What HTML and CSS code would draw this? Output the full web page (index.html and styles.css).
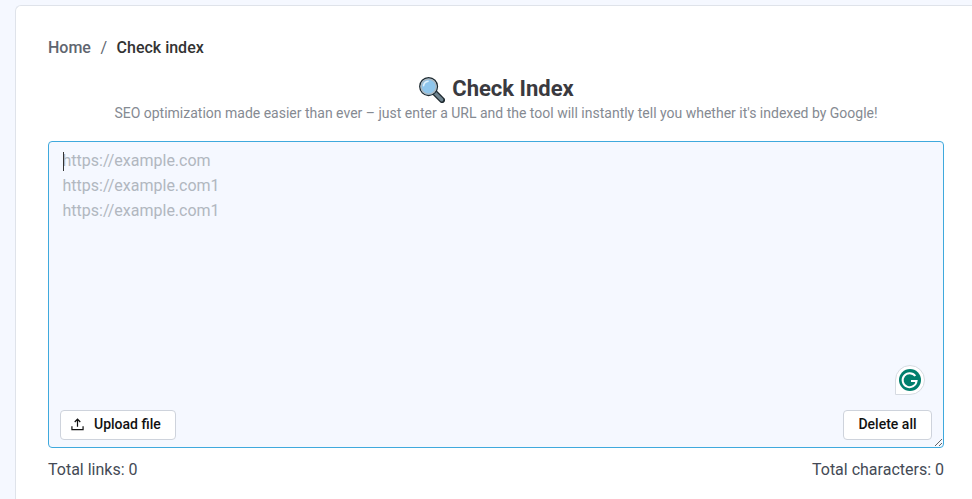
FILE: index.html
```html
<!DOCTYPE html>
<html lang="en">
<head>
<meta charset="utf-8">
<title>Check Index</title>
<link rel="stylesheet" href="styles.css">
</head>
<body>
<main class="card">
  <nav class="crumbs"><a class="crumb-link">Home</a><span class="crumb-sep">/</span><span class="crumb-current">Check index</span></nav>
  <h1 class="title">
    <svg class="title-icon" viewBox="0 0 28 28" aria-hidden="true">
      <path d="M17 17 L25 25" stroke="#1f2a30" stroke-width="6" stroke-linecap="round"/>
      <path d="M17.5 17.5 L24.6 24.6" stroke="#6f8490" stroke-width="3.4" stroke-linecap="round"/>
      <circle cx="11" cy="11" r="9.2" fill="#8fc6ec" stroke="#1f2a30" stroke-width="1.4"/>
      <circle cx="11" cy="11" r="7.8" fill="none" stroke="#aeb9c0" stroke-width="1.4"/>
      <path d="M5.8 10 A5.5 5.5 0 0 1 10.5 5.4" stroke="#dff1fc" stroke-width="1.6" fill="none" stroke-linecap="round"/>
    </svg>
    <span>Check Index</span>
  </h1>
  <p class="subtitle">SEO optimization made easier than ever – just enter a URL and the tool will instantly tell you whether it's indexed by Google!</p>
  <div class="field">
    <textarea class="urls" placeholder="https://example.com&#10;https://example.com1&#10;https://example.com1"></textarea>
    <span class="caret"></span>
    <span class="grammarly">
      <svg viewBox="0 0 22 22" class="grammarly-g" aria-hidden="true">
        <circle cx="11" cy="11" r="11" fill="#007f6d"/>
        <path d="M16.3 7 A7 7 0 1 0 17.6 12 L12 12" fill="none" stroke="#fff" stroke-width="2"/>
      </svg>
    </span>
    <button class="btn btn-upload" type="button">
      <svg class="btn-icon" viewBox="0 0 14 14" aria-hidden="true">
        <path d="M7 9.5 V1.5 M4 4.3 L7 1.3 L10 4.3 M1 9 V12.5 H13 V9" fill="none" stroke="#111" stroke-width="1.3"/>
      </svg>
      Upload file
    </button>
    <button class="btn btn-delete" type="button">Delete all</button>
  </div>
  <div class="totals"><span>Total links: 0</span><span>Total characters: 0</span></div>
</main>
</body>
</html>
```
FILE: styles.css
```css
* { box-sizing: border-box; }
html, body { height: 100%; margin: 0; overflow: hidden; }
body {
  background: #f5f8ff;
  padding: 5px 0 0 15px;
  font-family: Roboto, "Liberation Sans", sans-serif;
  color: #333;
}
.card {
  height: 100%;
  background: #fff;
  border: 1px solid #dfe3ea;
  border-width: 1px 0 0 1px;
  border-radius: 6px 0 0 0;
  padding: 32px 28px 0 32px;
}
.crumbs {
  display: flex;
  align-items: center;
  height: 20px;
  font-size: 16px;
  font-weight: 500;
  line-height: 20px;
}
.crumb-link { color: #5f6670; }
.crumb-sep { margin: 0 9.5px; color: #5f6670; font-weight: 400; }
.crumb-current { color: #333; }
.title {
  display: flex;
  justify-content: center;
  align-items: center;
  gap: 7px;
  margin: 16px 0 0;
  height: 30px;
  font-size: 22px;
  font-weight: 700;
  line-height: 30px;
  color: #3a3a3f;
}
.title-icon { width: 27px; height: 27px; }
.subtitle {
  margin: 0;
  text-align: center;
  font-size: 14px;
  line-height: 18px;
  color: #858a92;
}
.field { position: relative; margin-top: 19px; height: 307px; }
.urls {
  display: block;
  width: 100%;
  height: 100%;
  margin: 0;
  padding: 6px 13.5px;
  background: #f5f8ff;
  border: 1px solid #3fa9dd;
  border-radius: 4px;
  outline: none;
  font: 400 16px/25px Roboto, "Liberation Sans", sans-serif;
  color: #333;
}
.urls::placeholder { color: #b1b7c0; opacity: 1; }
.caret {
  position: absolute;
  left: 15px;
  top: 11px;
  width: 1px;
  height: 19px;
  background: #333;
}
.grammarly {
  position: absolute;
  left: 847px;
  top: 224px;
  width: 30px;
  height: 30px;
  display: flex;
  align-items: center;
  justify-content: center;
  background: #fff;
  border: 1px solid #d6dbe2;
  border-radius: 50% 50% 50% 0;
}
.grammarly-g { width: 22px; height: 22px; }
.btn {
  position: absolute;
  bottom: 8px;
  height: 30px;
  display: flex;
  align-items: center;
  justify-content: center;
  background: #fff;
  border: 1px solid #ced3dc;
  border-radius: 4px;
  padding: 0 0 2px;
  font: 500 14px/20px Roboto, "Liberation Sans", sans-serif;
  color: #111;
}
.btn-upload { left: 12px; width: 116px; gap: 10px; justify-content: flex-start; padding-left: 10px; }
.btn-icon { width: 13px; height: 13px; }
.btn-delete { right: 12px; width: 89px; }
.totals {
  display: flex;
  justify-content: space-between;
  margin-top: 12px;
  font-size: 16px;
  line-height: 20px;
  color: #444a55;
}
```
